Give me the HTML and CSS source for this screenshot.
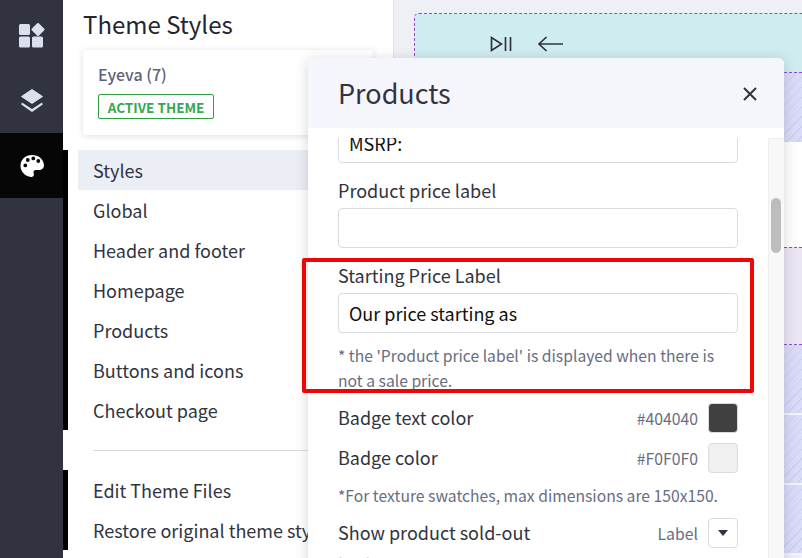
FILE: index.html
```html
<!DOCTYPE html>
<html lang="en">
<head>
<meta charset="utf-8">
<title>Theme Styles</title>
<link rel="stylesheet" href="styles.css">
</head>
<body>
<div class="app">
  <nav class="rail">
    <a class="rail-item">
      <svg width="26" height="25" viewBox="0 0 26 25"><rect x="0" y="1" width="11" height="11" rx="1.5"/><rect x="0" y="13.500" width="11" height="11" rx="1.500"/><rect x="13" y="13.500" width="11" height="11" rx="1.500"/><rect x="14" y="1.500" width="10" height="10" rx="1.500" transform="rotate(45 19 6.500)"/></svg>
    </a>
    <a class="rail-item">
      <svg width="24" height="25" viewBox="0 0 24 25"><path d="M12 1.500 22.500 8.500 12 15.500 1.500 8.500Z" stroke-linejoin="round" stroke="currentColor"/><path d="M2 14.500 12 21 22 14.500 22.800 16.500 12 24 1.200 16.500Z"/></svg>
    </a>
    <a class="rail-item rail-item-active">
      <svg width="24" height="24" viewBox="0 0 24 24"><path fill-rule="evenodd" d="M12 1C5.500 1 .5 5.600.5 11.700c0 5.800 4.500 10.700 10.400 11.200 2 .2 3-.9 3-2.300 0-.9-.4-1.500-.4-2.400 0-1.300 1-2.200 2.300-2.200h3.100c2.800 0 5.100-2 5.100-4.800C23.500 5.100 18.500 1 12 1ZM5.300 13.300a1.900 1.900 0 1 1 0-3.800 1.900 1.900 0 0 1 0 3.800Zm2.500-5.400a1.900 1.900 0 1 1 0-3.800 1.900 1.900 0 0 1 0 3.800Zm5.500-1.600a1.900 1.900 0 1 1 0-3.800 1.900 1.900 0 0 1 0 3.800Zm5 2.600a1.900 1.900 0 1 1 0-3.800 1.900 1.900 0 0 1 0 3.800Z"/></svg>
    </a>
  </nav>

  <aside class="sidebar">
    <h1 class="sidebar-title">Theme Styles</h1>
    <div class="theme-card">
      <div class="theme-name">Eyeva (7)</div>
      <span class="theme-badge">ACTIVE THEME</span>
    </div>
    <ul class="menu menu-main">
      <li class="menu-item menu-item-active">Styles</li>
      <li class="menu-item">Global</li>
      <li class="menu-item">Header and footer</li>
      <li class="menu-item">Homepage</li>
      <li class="menu-item">Products</li>
      <li class="menu-item">Buttons and icons</li>
      <li class="menu-item">Checkout page</li>
    </ul>
    <div class="menu-divider"></div>
    <ul class="menu">
      <li class="menu-item">Edit Theme Files</li>
      <li class="menu-item">Restore original theme styles</li>
    </ul>
  </aside>

  <main class="canvas">
    <div class="preview">
      <div class="preview-head">
        <svg class="preview-icons" width="74" height="20" viewBox="0 0 74 20"><path d="M1.500 3.500v13L11.500 10Z"/><path d="M15.500 3v14M20.500 3v14"/><path d="M73 10H49M56.500 3 49 10l7.500 7"/></svg>
      </div>
      <div class="hatch hatch-a"></div>
      <div class="plain"></div>
      <div class="tint"></div>
      <div class="hatch hatch-b"></div>
      <div class="hatch hatch-c"></div>
      <div class="hatch hatch-d"></div>
    </div>
  </main>
</div>

<section class="modal">
  <header class="modal-head">
    <h2 class="modal-title">Products</h2>
    <svg class="modal-close" width="16" height="16" viewBox="0 0 16 16"><path d="M2 2l12 12M14 2 2 14"/></svg>
  </header>
  <div class="modal-main">
    <div class="modal-scroll">
      <div class="modal-content">
        <div class="input input-first">MSRP:</div>
        <div class="field-label">Product price label</div>
        <div class="input"></div>
        <div class="field-label">Starting Price Label</div>
        <div class="input">Our price starting as</div>
        <p class="help help-price">* the 'Product price label' is displayed when there is not a sale price.</p>
        <div class="row">
          <span class="row-label">Badge text color</span>
          <span class="row-value">#404040</span>
          <span class="swatch swatch-dark"></span>
        </div>
        <div class="row">
          <span class="row-label">Badge color</span>
          <span class="row-value">#F0F0F0</span>
          <span class="swatch swatch-light"></span>
        </div>
        <p class="help help-texture">*For texture swatches, max dimensions are 150x150.</p>
        <div class="row row-tall">
          <span class="row-label row-label-wrap">Show product sold-out badge</span>
          <span class="row-value">Label</span>
          <span class="select"><svg width="10" height="6" viewBox="0 0 10 6"><path d="M0 0h10L5 6Z"/></svg></span>
        </div>
      </div>
    </div>
    <div class="scrollbar"><div class="scrollbar-thumb"></div></div>
  </div>
</section>

<div class="highlight"></div>
</body>
</html>
```

FILE: styles.css
```css
* { box-sizing: border-box; }
html, body { margin: 0; height: 558px; overflow: hidden; }
body {
  position: relative;
  width: 802px;
  font-family: "Noto Sans CJK SC", "Noto Sans", sans-serif;
  color: #313440;
  background: #eef0f6;
}
.app { display: flex; height: 558px; }

.rail { flex: 0 0 63px; background: #313440; padding-top: 3px; }
.rail-item { display: flex; height: 65px; align-items: center; justify-content: center; color: #dbdfee; fill: currentColor; }
.rail-item-active { background: #060607; color: #fff; }

.sidebar { flex: 0 0 331px; background: #fff; border-right: 1px solid #e1e3ec; overflow: hidden; }
.sidebar-title { margin: 0; padding: 8px 0 0 20px; height: 50px; font-size: 24px; line-height: 32px; font-weight: 400; color: #23262f; }
.theme-card {
  margin-left: 20px; width: 290px; height: 85px; padding: 13px 15px;
  border-radius: 4px; background: #fff;
  box-shadow: 0 1px 6px rgba(49,52,64,.16);
}
.theme-name { font-size: 16px; line-height: 22px; font-weight: 500; color: #5e637a; }
.theme-badge {
  display: inline-block; margin-top: 9px; height: 25px; width: 116px; text-align: center;
  border: 1px solid #2f9e44; border-radius: 2px;
  font-size: 13.500px; line-height: 24px; font-weight: 700; color: #35a852;
}
.menu { list-style: none; margin: 0; padding: 0 0 0 10px; border-left: 5px solid #000; }
.menu-main { margin-top: 15px; }
.menu-item { height: 40px; padding-left: 15px; font-size: 18px; line-height: 40px; white-space: nowrap; color: #313440; }
.menu-item-active { background: #eceef5; }
.menu-divider { height: 40px; margin: 0 0 0 30px; position: relative; }
.menu-divider::before { content: ""; display: block; height: 20px; border-bottom: 1px solid #d9dbe3; }

.canvas { flex: 1; min-width: 0; padding: 13px 0 0 20px; }
.preview { border-top: 1px dashed #8c4fc9; border-left: 1px dashed #8c4fc9; border-top-left-radius: 5px; overflow: hidden; }
.preview-head { height: 58px; background: #cfecf1; padding: 20px 0 0 75px; }
.preview-icons { display: block; fill: none; stroke: #313440; stroke-width: 1.700; }
.hatch { background: repeating-linear-gradient(135deg, #d8dcf8 0 3px, #ccd0ec 3px 4px, #d8dcf8 4px 7px); border-bottom: 2px solid #f3f4fc; }
.hatch-a { height: 70px; border: 0; border-top: 1px dashed #8c4fc9; }
.plain { height: 105px; background: #fff; }
.tint { height: 98px; background: #ebe5f4; border-top: 1px dashed #8c4fc9; border-bottom: 1px dashed #8c4fc9; }
.hatch-b { height: 70px; }
.hatch-c { height: 70px; }
.hatch-d { height: 70px; }

.modal {
  position: absolute; left: 308px; top: 58px; width: 476px; height: 520px;
  background: #fff; border-radius: 6px 6px 0 0;
  box-shadow: 0 2px 14px rgba(49,52,64,.2);
  overflow: hidden;
}
.modal-head { display: flex; align-items: center; justify-content: space-between; height: 70px; padding: 0 26px 0 30px; background: #f5f6fb; }
.modal-title { margin: 0; font-size: 27px; line-height: 40px; font-weight: 400; color: #313440; }
.modal-close { fill: none; stroke: #313440; stroke-width: 2; margin-top: 1px; }
.modal-main { display: flex; margin-top: 10px; height: 440px; }
.modal-scroll { flex: 1; min-width: 0; overflow: hidden; }
.modal-content { margin-top: -15px; padding: 0 30px; }
.scrollbar { flex: 0 0 16px; background: #f8f8f8; border: 1px solid #eeeeee; border-width: 1px 0 0 1px; padding: 59px 3px 0 2px; }
.scrollbar-thumb { height: 55px; background: #bdbdbd; border-radius: 5px; }

.input {
  height: 40px; padding: 0 10px; border: 1px solid #d9dbe3; border-radius: 4px;
  font-size: 18px; line-height: 38px; color: #111;
}
.field-label { margin-top: 15px; height: 30px; font-size: 18px; line-height: 24px; color: #313440; }
.help { margin: 0; font-size: 15.700px; line-height: 25px; color: #686d82; }
.help-price { margin-top: 10px; height: 60px; }
.help-texture { margin-top: 0; height: 35px; padding-top: 0; }
.row { display: flex; align-items: center; height: 30px; margin-bottom: 10px; }
.row-label { flex: 1; font-size: 18px; line-height: 30px; margin-top: -2px; color: #313440; }
.row-label-wrap { align-self: flex-start; flex: 0 0 210px; margin: -2px auto 0 0; line-height: 32px; }
.row-tall { height: 30px; overflow: visible; }
.row-value { margin-right: 10px; font-size: 15.800px; color: #686d82; }
.swatch { width: 30px; height: 30px; border-radius: 4px; border: 1px solid #d9dbe3; }
.swatch-dark { background: #404040; }
.swatch-light { background: #f0f0f0; }
.select { display: flex; align-items: center; justify-content: center; width: 30px; height: 30px; border: 1px solid #d9dbe3; border-radius: 4px; fill: #313440; }

.highlight { position: absolute; left: 302px; top: 258px; width: 452px; height: 135px; border: 4px solid #ee0606; border-radius: 2px; }
```
